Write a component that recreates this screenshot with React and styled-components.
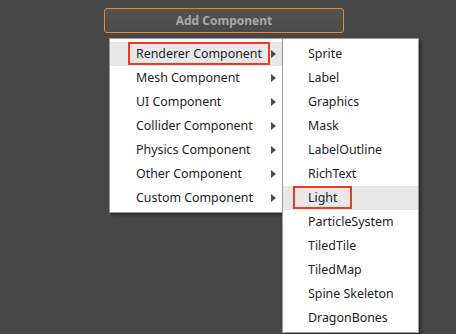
import React from 'react'
import styled, { createGlobalStyle } from 'styled-components'

const Global = createGlobalStyle`
  html, body {
    margin: 0;
    padding: 0;
    background: #474747;
  }
  body {
    font-family: "Noto Sans", "Open Sans", sans-serif;
  }
`

const Page = styled.div`
  width: 456px;
  height: 334px;
  overflow: hidden;
  padding: 8px 0 0 104px;
  box-sizing: border-box;
`

const AddButton = styled.button`
  display: block;
  width: 240px;
  height: 25px;
  padding: 0;
  border: 1px solid #e58a2c;
  border-radius: 3px;
  background: linear-gradient(#525252, #4a4a4a);
  color: #a9a9a9;
  font-family: inherit;
  font-size: 12px;
  font-weight: bold;
  cursor: pointer;
`

const Menus = styled.div`
  display: flex;
  align-items: flex-start;
  margin: 5px 0 0 5px;
`

const Menu = styled.ul`
  list-style: none;
  margin: 0;
  margin-left: ${p => (p.$sub ? '-1px' : '0')};
  padding: 3px 0 2px;
  width: ${p => p.$width}px;
  background: #fff;
  border: 1px solid #9c9c9c;
  box-shadow: 2px 2px 3px rgba(0, 0, 0, 0.45);
  box-sizing: border-box;
`

const Row = styled.li`
  display: flex;
  align-items: flex-start;
  height: 24px;
  padding-left: ${p => p.$indent}px;
  padding-right: 6px;
  background: ${p => (p.$active ? '#e8e8e8' : 'transparent')};
  font-size: 12.4px;
  color: #1c1c28;
`

const Label = styled.span`
  display: flex;
  align-items: center;
  height: 23px;
  padding: 0 ${p => p.$pad}px;
  border: 2px solid ${p => (p.$marked ? '#ee3a22' : 'transparent')};
  box-sizing: border-box;
  white-space: nowrap;
`

const Arrow = styled.span`
  margin-left: auto;
  margin-top: 8px;
  width: 0;
  height: 0;
  border-top: 4px solid transparent;
  border-bottom: 4px solid transparent;
  border-left: 5px solid #4a4a4a;
`

const groups = [
  'Renderer Component',
  'Mesh Component',
  'UI Component',
  'Collider Component',
  'Physics Component',
  'Other Component',
  'Custom Component',
]

const renderers = [
  'Sprite',
  'Label',
  'Graphics',
  'Mask',
  'LabelOutline',
  'RichText',
  'Light',
  'ParticleSystem',
  'TiledTile',
  'TiledMap',
  'Spine Skeleton',
  'DragonBones',
]

export default function App() {
  return (
    <>
      <Global />
      <Page>
        <AddButton>Add Component</AddButton>
        <Menus>
          <Menu $width={174}>
            {groups.map((g, i) => (
              <Row key={g} $indent={18} $active={i === 0}>
                <Label $pad={6} $marked={i === 0}>{g}</Label>
                <Arrow />
              </Row>
            ))}
          </Menu>
          <Menu $sub $width={137}>
            {renderers.map(r => (
              <Row key={r} $indent={10} $active={r === 'Light'}>
                <Label $pad={13} $marked={r === 'Light'}>{r}</Label>
              </Row>
            ))}
          </Menu>
        </Menus>
      </Page>
    </>
  )
}
